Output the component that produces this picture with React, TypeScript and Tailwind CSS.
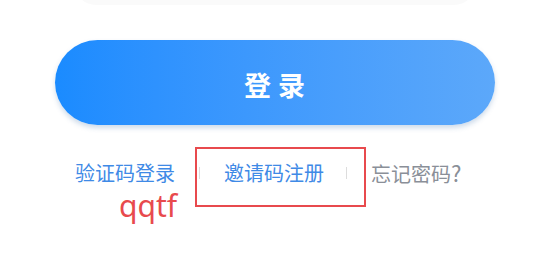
export default function App() {
  const cjk = { fontFamily: '"Noto Sans CJK SC", "Noto Sans", sans-serif' };
  return (
    <div className="relative w-[550px] h-[275px] bg-white overflow-hidden" style={cjk}>
      <div className="mx-auto -mt-[40px] h-[45px] w-[402px] rounded-b-[22px] bg-[#fafafa]" />
      <div className="mt-[-5px] pt-[40px] px-[55px]">
        <button className="flex h-[85px] w-full items-center justify-center rounded-full bg-gradient-to-r from-[#1a8bff] to-[#5ca8fa] shadow-[0_3px_5px_rgba(60,110,170,0.25)]">
          <span className="pt-[5px] pl-[6px] text-[27px] font-bold tracking-[7px] text-white">登录</span>
        </button>
      </div>
      <div className="relative mt-[33px] flex items-center pl-[75px] text-[20px] leading-[28px]">
        <span className="text-[#3f8ae6]">验证码登录</span>
        <span className="mx-[24px] h-[12px] w-px bg-[#dddddd]" />
        <span className="text-[#3f8ae6]">邀请码注册</span>
        <span className="ml-[22px] mr-[24px] h-[12px] w-px bg-[#dddddd]" />
        <span className="text-[#8a8f98]">
          忘记密码<span className="text-[22px]">?</span>
        </span>
        <div className="absolute left-[195px] top-[-11px] h-[60px] w-[171px] border-2 border-[#e84a4d]" />
      </div>
      <div
        className="ml-[119px] mt-[3px] text-[30px] leading-[30px] text-[#e84a4d]"
        style={{ fontFamily: '"Noto Sans", sans-serif' }}
      >
        qqtf
      </div>
    </div>
  );
}
